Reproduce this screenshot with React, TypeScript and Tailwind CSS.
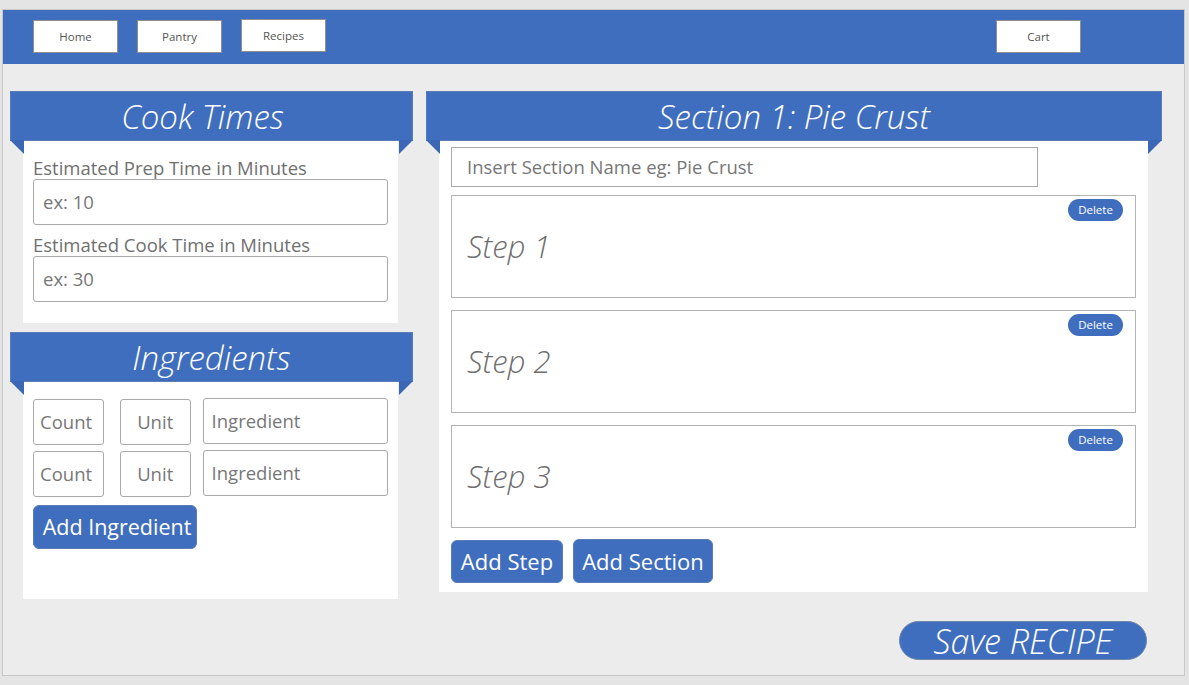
import React from "react";

const font = { fontFamily: '"Open Sans", "Noto Sans", sans-serif' };

function NavButton({ label, className = "" }: { label: string; className?: string }) {
  return (
    <button className={`w-[85px] h-[33px] bg-white border border-[#8f8f8f] text-[11.5px] text-[#555] ${className}`}>
      {label}
    </button>
  );
}

function PanelHeader({ title, className = "" }: { title: string; className?: string }) {
  return (
    <div className={`relative h-[50px] bg-[#3f6ebf] border border-[#5a7cb8] flex items-center justify-center ${className}`}>
      <span className="text-white text-[33px] italic font-light leading-none">{title}</span>
      <div className="absolute left-[-1px] top-full w-0 h-0 border-t-[14px] border-t-[#3b67b6] border-l-[14px] border-l-transparent" />
      <div className="absolute right-[-1px] top-full w-0 h-0 border-t-[14px] border-t-[#3b67b6] border-r-[14px] border-r-transparent" />
    </div>
  );
}

function Field({ placeholder, className = "" }: { placeholder: string; className?: string }) {
  return (
    <div className={`bg-white border border-[#a9a9a9] rounded-[3px] flex items-center text-[18.5px] text-[#777] ${className}`}>
      {placeholder}
    </div>
  );
}

function StepBox({ n }: { n: number }) {
  return (
    <div className="relative h-[103px] border border-[#b3b3b3] flex items-center pl-[15px]">
      <span className="text-[31px] italic font-light text-[#6e6e6e]">Step {n}</span>
      <button className="absolute top-[3px] right-[12px] w-[55px] h-[22px] rounded-full bg-[#3f6ebf] text-white text-[11.5px]">
        Delete
      </button>
    </div>
  );
}

export default function App() {
  return (
    <div className="min-h-[685px] bg-[#e4e4e4] pt-[9px] pl-[2px] pr-[4px]" style={font}>
      <div className="h-[667px] border border-[#c8c8c8] bg-[#ececec]">
        {/* nav */}
        <div className="h-[54px] bg-[#3f6ebf] flex items-start pt-[10px] pl-[30px]">
          <NavButton label="Home" />
          <NavButton label="Pantry" className="ml-[19px]" />
          <NavButton label="Recipes" className="ml-[19px] mt-[-1px]" />
          <NavButton label="Cart" className="ml-[670px]" />
        </div>

        <div className="flex pt-[27px] pl-[7px]">
          {/* left column */}
          <div className="w-[403px] flex flex-col">
            <PanelHeader title="Cook Times" className="pr-[18px]" />
            <div className="ml-[13px] w-[375px] h-[182px] bg-white px-[10px] pt-[15px]">
              <div className="h-[23px] leading-[23px] text-[18.5px] text-[#707070]">Estimated Prep Time in Minutes</div>
              <Field placeholder="ex: 10" className="h-[46px] pl-[9px]" />
              <div className="mt-[8px] h-[23px] leading-[23px] text-[18.5px] text-[#707070]">Estimated Cook Time in Minutes</div>
              <Field placeholder="ex: 30" className="h-[46px] pl-[9px]" />
            </div>

            <div className="mt-[9px]">
              <PanelHeader title="Ingredients" />
            </div>
            <div className="ml-[13px] w-[375px] h-[217px] bg-white px-[10px] pt-[17px]">
              {[0, 1].map((i) => (
                <div key={i} className={`flex ${i ? "mt-[6px]" : ""}`}>
                  <Field placeholder="Count" className="w-[71px] h-[46px] pl-[6px]" />
                  <Field placeholder="Unit" className="w-[71px] h-[46px] ml-[16px] justify-center" />
                  <Field placeholder="Ingredient" className="w-[186px] h-[46px] ml-[12px] pl-[8px] -mt-[1px]" />
                </div>
              ))}
              <button className="mt-[8px] w-[164px] h-[44px] rounded-[6px] bg-[#3f6ebf] border border-[#5a7cb8] text-white text-[21.5px] pl-[4px]">
                Add Ingredient
              </button>
            </div>
          </div>

          {/* right column */}
          <div className="ml-[13px] w-[736px] flex flex-col">
            <PanelHeader title="Section 1: Pie Crust" />
            <div className="ml-[13px] w-[709px] h-[451px] bg-white pl-[12px] pr-[12px] pt-[6px]">
              <div className="w-[587px] h-[40px] border border-[#a9a9a9] flex items-center pl-[15px] text-[18.5px] text-[#777]">
                Insert Section Name eg: Pie Crust
              </div>
              <div className="mt-[8px] flex flex-col gap-[12px]">
                <StepBox n={1} />
                <StepBox n={2} />
                <StepBox n={3} />
              </div>
              <div className="mt-[12px] flex gap-[10px]">
                <button className="w-[112px] h-[43px] rounded-[6px] bg-[#3f6ebf] border border-[#5a7cb8] text-white text-[22px]">
                  Add Step
                </button>
                <button className="w-[140px] h-[44px] -mt-[1px] rounded-[6px] bg-[#3f6ebf] border border-[#5a7cb8] text-white text-[22px]">
                  Add Section
                </button>
              </div>
            </div>
            <div className="flex justify-end pr-[15px] mt-[29px]">
              <button className="w-[248px] h-[39px] rounded-full bg-[#3f6ebf] border border-[#6f86ad] text-white text-[34px] italic font-light leading-none">
                Save RECIPE
              </button>
            </div>
          </div>
        </div>
      </div>
    </div>
  );
}
